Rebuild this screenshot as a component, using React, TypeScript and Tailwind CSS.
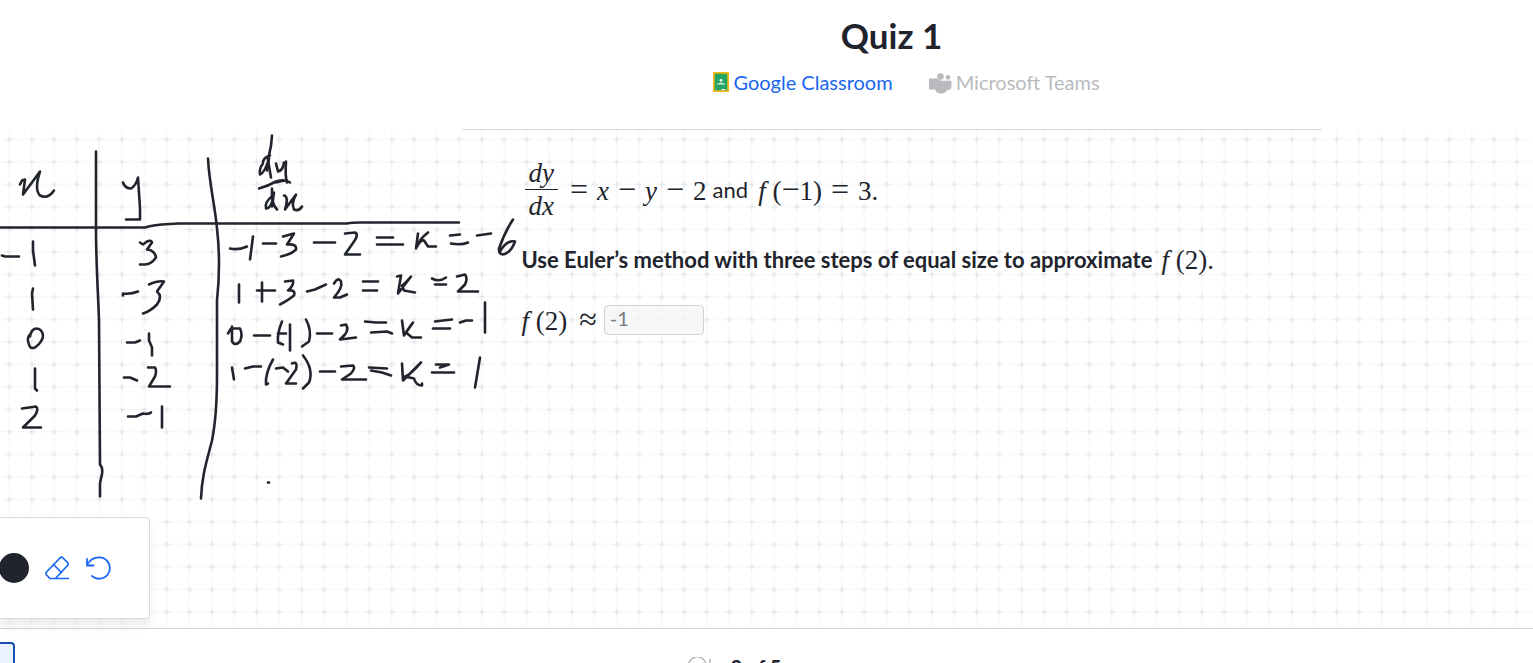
import React from "react";

const INK: string[] = [
  "M96 151V228C96 262 98 290 99 320L100 464Q104 468 101 478L100 483V496",
  "M208 158C209 182 215 205 217 228Q221 262 217 300V375C217 405 215 425 212 440C207 460 202 474 201 498",
  "M0 227H145C157 223 170 224 178 223H346C352 222 357 222 360 222H459",
  "M20 184L22 180L25 179L23 194L40 171C37 180 35 190 40 195Q48 199 54 190",
  "M123 182Q125 188 131 188Q136 185 138 177L140 208V219H126",
  "M2 255L5 256H19", "M33 241V250L35 265",
  "M140 242L143 244L147 241Q151 239 152 242L147 249Q155 250 156 257Q151 264 145 264H140",
  "M33 288L32 293L33 309",
  "M123 295V293Q131 294 138 291", "M149 284Q158 280 164 281L157 291Q163 296 157 304Q150 311 143 313",
  "M31 333Q26 337 29 344Q30 349 35 347Q43 341 43 335Q42 328 36 328Q31 329 30 336",
  "M35 368V388L37 390", "M22 408L36 406Q39 408 35 415L23 427H41",
  "M127 342L135 342L140 340", "M149 333V340L152 347V355",
  "M124 377H130L137 380", "M148 367H155Q157 370 155 376L149 386H170",
  "M128 416H136L143 413Q149 414 151 412", "M162 406V427",
  "M272 135L271 145L268 160L271 177", "M270 155Q262 158 263 163Q259 168 260 174Q265 172 269 158L267 170",
  "M276 163L278 171Q283 170 284 162", "M286 161Q285 176 287 182", "M259 188Q267 186 276 181Q285 178 290 182M276 182Q284 180 287 180",
  "M272 188Q271 203 277 209", "M273 195Q264 202 266 208Q272 208 274 192L272 206",
  "M284 195Q289 196 285 209L296 194Q291 203 294 209Q299 211 302 206",
  "M230 248Q238 250 247 246", "M253 236L250 259", "M263 243H276",
  "M283 236L294 233L287 244Q297 243 296 249Q291 254 281 256", "M314 242H335",
  "M345 233L355 232Q359 234 354 241L345 254H360", "M377 237H393", "M377 244H403",
  "M418 233L416 248", "M428 232Q419 239 417 246Q421 239 424 240L428 246H436",
  "M450 235L460 234", "M451 243Q461 245 468 242", "M477 235L491 233",
  "M513 219Q505 231 499 248C498 258 510 255 515 241Q507 239 500 251",
  "M239 284V302", "M257 290H275", "M262 282V301", "M285 281L293 280Q294 285 288 290Q296 289 294 295Q288 300 280 304",
  "M307 291L315 289L326 284", "M334 283Q338 276 341 281Q343 287 334 297H340L347 294", "M363 281H378", "M363 290H377",
  "M397 276L401 275L398 293L411 276Q405 283 402 285L404 290L415 292",
  "M432 278Q439 282 446 277", "M435 284H446", "M457 276L465 274Q468 278 465 284L458 291L478 291",
  "M228 333L231 328H240Q243 334 240 341Q235 346 232 341V326", "M254 335H270",
  "M282 321Q277 333 278 342L283 344", "M278 333H286", "M290 324V350", "M306 319Q312 330 309 341L302 346",
  "M317 333H332", "M341 325L346 324Q349 329 345 334L340 339L356 337", "M365 321L376 322H386", "M371 332L387 331L392 333",
  "M402 320L404 335L413 322Q407 330 406 332L412 337H421", "M435 321L443 320L452 319", "M433 328H450", "M460 322L466 320L472 320", "M485 302V332",
  "M232 367L234 379", "M245 368L253 366H261", "M273 359Q265 373 266 384L268 383", "M276 368L283 367L288 371", "M292 363Q298 360 296 369L286 383H296", "M303 355Q314 369 309 382L303 388",
  "M320 371H335", "M341 366L353 365Q356 367 351 373L342 379H366", "M369 367L387 368", "M371 370L382 372L391 375",
  "M402 363L403 380L421 362Q411 374 405 376L414 378Q416 385 422 385V383", "M436 364H449L440 367", "M432 372H454", "M480 357L475 387",
  "M268 482H269",
];

const Grid = () => (
  <svg aria-hidden="true" className="absolute inset-0 h-full w-full">
    <defs>
      <pattern id="grid" x="-2.25" y="-2.1" width="22.5" height="22.5" patternUnits="userSpaceOnUse">
        <path d="M0 11.5H22.5M11.5 0V22.5" stroke="#efeff0" strokeWidth="1" strokeDasharray="1.5 1.5" />
        <path d="M8.5 11.5H14.5M11.5 8.5V14.5" stroke="#e6e7e8" strokeWidth="1.4" />
      </pattern>
    </defs>
    <rect width="100%" height="100%" fill="url(#grid)" />
  </svg>
);

const Ink = () => (
  <svg
    role="img"
    aria-label="Handwritten table of x, y and dy/dx"
    viewBox="0 129.5 530 380"
    className="pointer-events-none absolute left-0 top-0 h-[380px] w-[530px]"
    fill="none"
    stroke="#21242c"
    strokeWidth="2.6"
    strokeLinecap="round"
    strokeLinejoin="round"
  >
    {INK.map((d) => (
      <path key={d} d={d} />
    ))}
  </svg>
);

const V = ({ children }: { children: React.ReactNode }) => <i className="italic">{children}</i>;

const Op = ({ children }: { children: React.ReactNode }) => (
  <span className="text-[32px] leading-8">{children}</span>
);

const mathClass =
  "inline-flex items-baseline whitespace-nowrap font-['Liberation_Serif',serif] text-[27px] font-normal leading-8";

export default function App() {
  return (
    <div className="flex h-screen flex-col overflow-hidden bg-white font-['Lato',sans-serif] text-[#21242c]">
      <header className="shrink-0 pl-[250px]">
        <div className="mx-auto flex h-[130px] max-w-[860px] flex-col items-center border-b border-[#d6d8da] pt-[15px]">
          <h1 className="text-[35px] font-bold leading-10">Quiz 1</h1>
          <div className="mt-[11px] flex items-center gap-9 pl-[30px] text-[20px] leading-8">
            <a href="#classroom" className="flex items-center gap-1 text-[#1865f2]">
              <svg viewBox="0 0 16 20" className="h-5 w-4" aria-hidden="true">
                <path fill="#f5ba14" d="M0 0h16v20H0z" />
                <path fill="#23a566" d="M1.7 1.7h12.6v16.6H1.7z" />
                <circle cx="8" cy="8.3" r="1.4" fill="#fff" />
                <path fill="#d5eee0" d="M3.600 12.500q1-1.700 2.500-1.200Q8 9.800 9.900 11.300q1.500-.5 2.500 1.200z" />
                <path fill="#e8f0ea" d="M8.500 17h4v1.300h-4z" />
              </svg>
              Google Classroom
            </a>
            <a href="#teams" aria-disabled="true" className="flex items-center gap-1 text-[#b8babd]">
              <svg viewBox="0 0 23 24" className="h-6 w-[23px]" fill="#b8babd" aria-hidden="true">
                <circle cx="11.500" cy="6.500" r="3.300" />
                <circle cx="19" cy="7.300" r="2.400" />
                <path d="M0 8.500h8.500q3 2.500 5.500 2.300h7.500q1 0 1 1v4q0 4.500-4.500 4.500-2 3.200-6 3.200-4.500 0-6-4H0z" />
              </svg>
              Microsoft Teams
            </a>
          </div>
        </div>
      </header>

      <main className="relative min-h-[498px] flex-none">
        <Grid />
        <Ink />
        <div className="relative pl-[250px]">
          <div className="mx-auto max-w-[860px] px-[60px] pt-[27px] text-[22px] leading-8">
            <p className="flex items-center gap-[6px]">
              <span className="flex items-center gap-[9px]">
                <span className={mathClass}>
                  <span className="flex flex-col items-center px-[3px]">
                    <span className="border-b border-[#21242c] px-1"><V>dy</V></span>
                    <span><V>dx</V></span>
                  </span>
                </span>
                <span className={mathClass + " gap-[9px]"}>
                  <Op>=</Op><V>x</V><Op>−</Op><V>y</V><Op>−</Op><span>2</span>
                </span>
              </span>
              <span>and</span>
              <span className={mathClass + " gap-[9px] pl-1"}>
                <span><V>f</V> (<Op>−</Op>1)</span><Op>=</Op><span>3.</span>
              </span>
            </p>
            <p className="mt-[22px] flex items-center gap-[9px] whitespace-nowrap font-bold">
              Use Euler’s method with three steps of equal size to approximate
              <span className={mathClass}><span><V>f</V> (2).</span></span>
            </p>
            <div className="mt-[27px] flex items-center gap-[7px]">
              <label htmlFor="answer" className={mathClass + " gap-3"}>
                <span><V>f</V> (2)</span><Op>≈</Op>
              </label>
              <input
                id="answer"
                defaultValue="-1"
                disabled
                className="h-[30px] w-[100px] rounded border border-[#d0d2d5] bg-[#f2f3f5]/70 px-[5px] pb-1 text-[20px] text-[#7a7c81]"
              />
            </div>
          </div>
        </div>
        <div className="absolute bottom-[9px] left-0 flex h-[102px] w-[150px] items-center rounded-r border border-l-0 border-[#d9dadc] bg-white shadow-[0_8px_8px_rgba(33,36,44,0.08)]">
          <button aria-label="Black ink" className="h-[30px] w-[30px] -ml-px rounded-full bg-[#21242c]" />
          <button aria-label="Eraser" className="ml-4">
            <svg viewBox="0 0 24 24" className="h-6 w-6" fill="none" stroke="#1865f2" strokeWidth="1.700" strokeLinejoin="round" strokeLinecap="round">
              <path d="M5 22.500L1.500 19Q.5 17.500 1.500 16L15 2Q16.500.5 18 2L22.500 6.500Q24 8 22.500 9.500L10.500 22.500M8.500 8.500L16.500 16.500M5 22.500H23.500" />
            </svg>
          </button>
          <button aria-label="Undo" className="ml-4">
            <svg viewBox="0 0 26 24" className="h-6 w-[26px]" fill="none" stroke="#1865f2" strokeWidth="1.800" strokeLinecap="round">
              <path d="M2 3V9.500H8.500M2 9.500Q5.500 1.300 14 1.300A10.700 10.700 0 1 1 7 20" />
            </svg>
          </button>
        </div>
      </main>

      <footer className="flex h-16 shrink-0 border-t border-[#d6d8da] bg-white">
        <button aria-label="Previous" className="mt-[13px] h-10 w-[15px] rounded-tr border-r-2 border-t-2 border-[#1b50b3] bg-[#ebf2ff]" />
        <div className="flex flex-1 items-start justify-center gap-5 pr-20 pt-[26px]">
          <svg viewBox="0 0 24 24" className="mt-[2px] h-6 w-6" fill="none" stroke="#b8babd" strokeWidth="1.600" aria-hidden="true">
            <path d="M1 12A9.500 11 0 0 1 19 6M23 2V9H16" />
          </svg>
          <span className="text-[20px] font-bold leading-6">2 of 5</span>
        </div>
      </footer>
    </div>
  );
}
